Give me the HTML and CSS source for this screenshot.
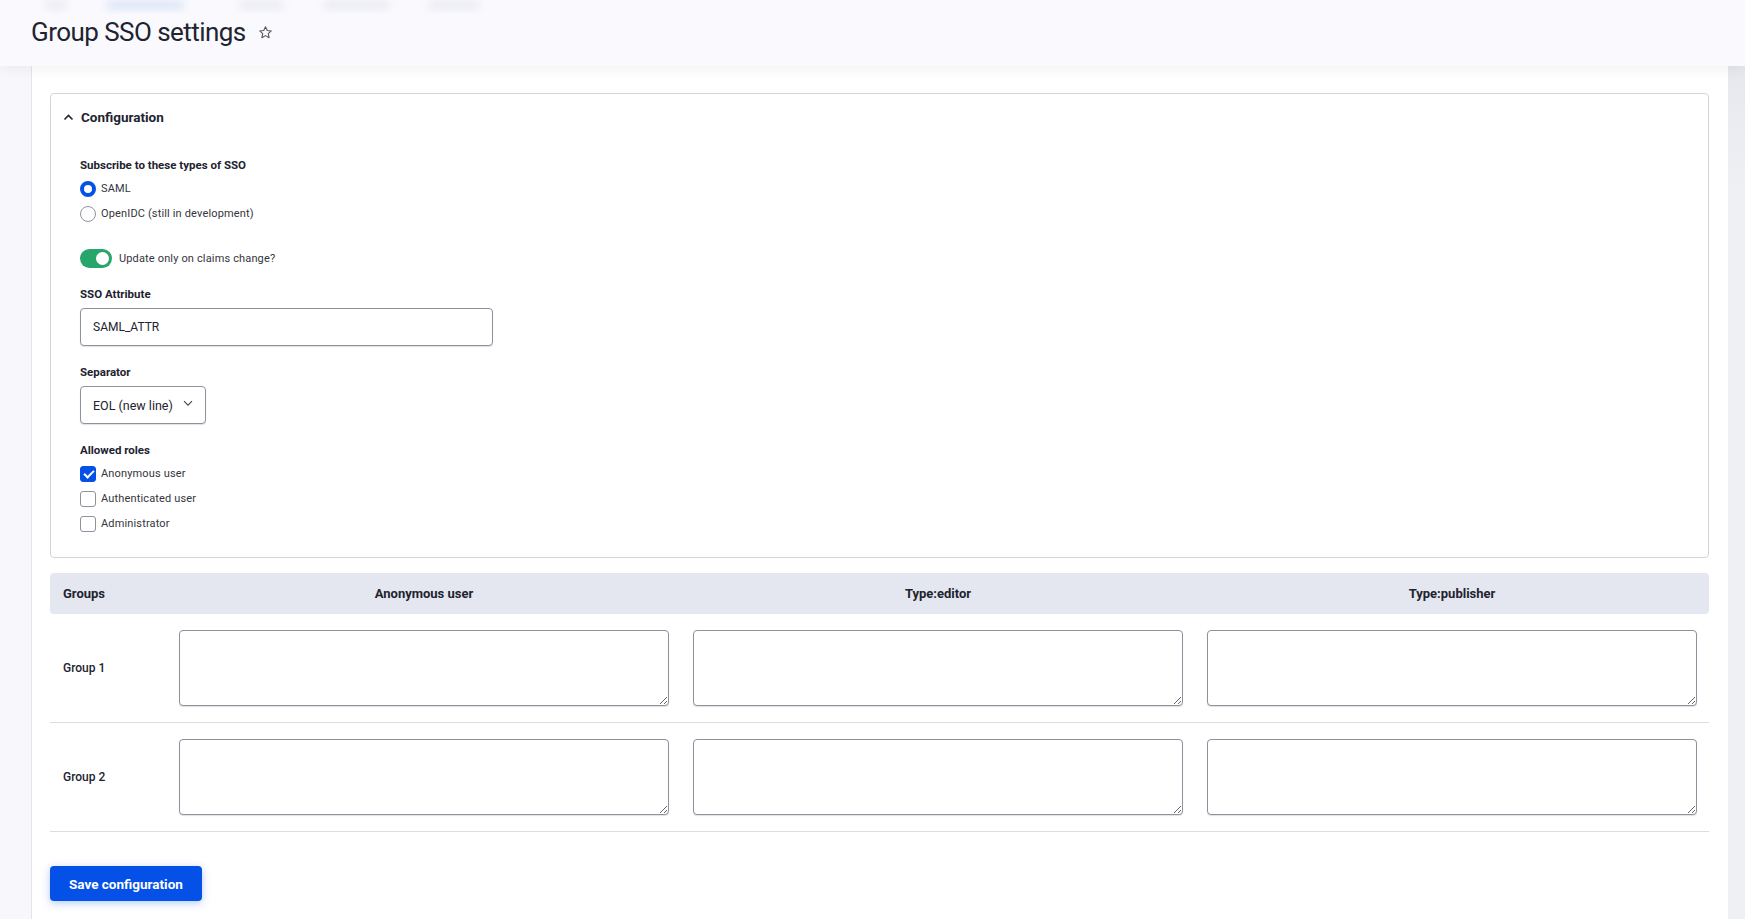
FILE: index.html
```html
<!DOCTYPE html>
<html>
<head>
    <title>Group SSO settings</title>
    <link rel="stylesheet" href="styles.css">
</head>
<body>
    <header class="page-header">
        <div class="tabs">
            <span class="tab tab-home"></span>
            <span class="tab tab-active"></span>
            <span class="tab tab-one"></span>
            <span class="tab tab-two"></span>
            <span class="tab tab-three"></span>
        </div>
        <h1 class="page-title">
            Group SSO settings
            <svg class="star" width="15" height="15" viewBox="0 0 24 24">
                <path d="M12 2.8l2.8 6 6.5.7-4.9 4.4 1.4 6.4L12 17l-5.8 3.3 1.4-6.4-4.9-4.4 6.5-.7z" fill="none" stroke="#55565b" stroke-width="1.7" stroke-linejoin="round"/>
            </svg>
        </h1>
    </header>

    <div class="layout">
        <main class="panel">
            <form class="sso-form">
                <details class="config" open>
                    <summary>
                        <svg class="summary-icon" width="11" height="11" viewBox="0 0 11 11">
                            <path d="M1.5 7.5L5.5 3.5 9.5 7.5" fill="none" stroke="#222330" stroke-width="1.6"/>
                        </svg>
                        Configuration
                    </summary>
                    <div class="config-body">
                        <div class="form-item first">
                            <div class="form-label">Subscribe to these types of SSO</div>
                            <label class="option">
                                <input type="radio" name="sso_type" value="saml" checked>
                                <span>SAML</span>
                            </label>
                            <label class="option">
                                <input type="radio" name="sso_type" value="openidc">
                                <span>OpenIDC (still in development)</span>
                            </label>
                        </div>

                        <div class="form-item toggle-item">
                            <label class="toggle">
                                <input type="checkbox" checked>
                                <span class="toggle-track"><span class="toggle-knob"></span></span>
                                <span>Update only on claims change?</span>
                            </label>
                        </div>

                        <div class="form-item">
                            <label class="form-label" for="sso-attribute">SSO Attribute</label>
                            <input type="text" id="sso-attribute" class="text-input" value="SAML_ATTR">
                        </div>

                        <div class="form-item">
                            <label class="form-label" for="separator">Separator</label>
                            <span class="select-wrap">
                                <select id="separator" class="select-input">
                                    <option>EOL (new line)</option>
                                    <option>Comma</option>
                                </select>
                                <svg class="select-icon" width="10" height="8" viewBox="0 0 10 8">
                                    <path d="M1 2.2l4 4 4-4" fill="none" stroke="#444" stroke-width="1.1"/>
                                </svg>
                            </span>
                        </div>

                        <div class="form-item">
                            <div class="form-label">Allowed roles</div>
                            <label class="option">
                                <input type="checkbox" checked>
                                <span>Anonymous user</span>
                            </label>
                            <label class="option">
                                <input type="checkbox">
                                <span>Authenticated user</span>
                            </label>
                            <label class="option">
                                <input type="checkbox">
                                <span>Administrator</span>
                            </label>
                        </div>
                    </div>
                </details>

                <table class="groups-table">
                    <thead>
                        <tr>
                            <th class="col-group">Groups</th>
                            <th>Anonymous user</th>
                            <th>Type:editor</th>
                            <th>Type:publisher</th>
                        </tr>
                    </thead>
                    <tbody>
                        <tr>
                            <td class="col-group">Group 1</td>
                            <td><textarea></textarea></td>
                            <td><textarea></textarea></td>
                            <td><textarea></textarea></td>
                        </tr>
                        <tr>
                            <td class="col-group">Group 2</td>
                            <td><textarea></textarea></td>
                            <td><textarea></textarea></td>
                            <td><textarea></textarea></td>
                        </tr>
                    </tbody>
                </table>

                <button type="submit" class="btn-primary">Save configuration</button>
            </form>
        </main>
        <div class="scroll-track"></div>
    </div>
</body>
</html>
```

FILE: styles.css
```css
* {
    box-sizing: border-box;
}

body {
    margin: 0;
    background: #f8f8fc;
    font-family: Roboto, "Noto Sans", sans-serif;
    color: #222330;
}

/* header */

.page-header {
    position: relative;
    z-index: 2;
    height: 66px;
    background: #fafafe;
    box-shadow: 0 4px 12px rgba(0, 0, 0, 0.05);
}

.tabs {
    display: flex;
    height: 14px;
    overflow: hidden;
}

.tab {
    display: block;
    height: 8px;
    margin-top: 1px;
    border-radius: 4px;
    background: #e8e9ef;
    filter: blur(4px);
}

.tab-home {
    width: 22px;
    margin-left: 45px;
}

.tab-active {
    width: 78px;
    margin-left: 39px;
    background: #d9e2f6;
}

.tab-one {
    width: 45px;
    margin-left: 55px;
}

.tab-two {
    width: 67px;
    margin-left: 39px;
}

.tab-three {
    width: 51px;
    margin-left: 38px;
}

.page-title {
    display: flex;
    align-items: center;
    margin: 0 0 0 31px;
    font-size: 26px;
    font-weight: 400;
    line-height: 36px;
    letter-spacing: -0.55px;
}

.star {
    margin-left: 12px;
}

/* layout */

.layout {
    display: flex;
    min-height: calc(100vh - 66px);
}

.panel {
    flex: 1;
    margin-left: 31px;
    padding: 27px 19px 40px 18px;
    background: #fff;
    border-left: 1px solid #e4e5eb;
}

.scroll-track {
    width: 17px;
    background: linear-gradient(#e6e8ee, #eef0f4 120px);
}

/* details */

.config {
    border: 1px solid #d4d5db;
    border-radius: 4px;
}

.config summary {
    display: flex;
    align-items: center;
    gap: 7px;
    padding: 15px 12px;
    font-size: 13.5px;
    font-weight: 700;
    line-height: 16px;
    list-style: none;
    cursor: pointer;
}

.config summary::-webkit-details-marker {
    display: none;
}

.config-body {
    padding: 0 29px 21px;
}

.form-item {
    margin-top: 18px;
}

.form-item.first {
    margin-top: 17px;
}

.form-item.toggle-item {
    margin-top: 23px;
}

.form-label {
    display: block;
    margin-bottom: 6px;
    font-size: 11.5px;
    font-weight: 700;
    line-height: 16px;
}

.form-item .form-label + .option {
    margin-top: -3px;
}

.option {
    display: flex;
    align-items: center;
    height: 25px;
    font-size: 11px;
    letter-spacing: 0.15px;
    color: #34353d;
}

.option input {
    appearance: none;
    width: 16px;
    height: 16px;
    margin: 0 5px 0 0;
    border: 1px solid #8e929c;
    background: #fff;
}

.option input[type="radio"] {
    border-radius: 50%;
}

.option input[type="radio"]:checked {
    border: 4px solid #0550e6;
}

.option input[type="checkbox"] {
    border-radius: 3px;
}

.option input[type="checkbox"]:checked {
    border-color: #0550e6;
    background: #0550e6;
    position: relative;
}

.option input[type="checkbox"]:checked::after {
    content: "";
    position: absolute;
    left: 4.5px;
    top: 1.5px;
    width: 4px;
    height: 8px;
    border: solid #fff;
    border-width: 0 2px 2px 0;
    transform: rotate(45deg);
}

/* toggle */

.toggle {
    display: flex;
    align-items: center;
    gap: 7px;
    height: 19px;
    font-size: 11px;
    letter-spacing: 0.15px;
    color: #34353d;
}

.toggle input {
    display: none;
}

.toggle-track {
    display: flex;
    justify-content: flex-end;
    align-items: center;
    width: 32px;
    height: 19px;
    padding: 0 3px;
    border-radius: 10px;
    background: #27a56a;
}

.toggle-knob {
    width: 13px;
    height: 13px;
    border-radius: 50%;
    background: #fff;
}

/* inputs */

.text-input,
.select-input,
textarea {
    border: 1px solid #8e929c;
    border-radius: 4px;
    background: #fff;
    box-shadow: 0 1px 1px rgba(0, 0, 0, 0.12);
    font-family: inherit;
    color: #222330;
}

.text-input {
    display: block;
    width: 413px;
    height: 38px;
    padding: 0 12px;
    font-size: 12px;
}

.select-wrap {
    position: relative;
    display: inline-block;
}

.select-input {
    appearance: none;
    width: 126px;
    height: 38px;
    padding: 0 28px 0 12px;
    font-size: 12.5px;
}

.select-icon {
    position: absolute;
    right: 13px;
    top: 13px;
    pointer-events: none;
}

/* groups table */

.groups-table {
    width: 100%;
    margin-top: 15px;
    border-collapse: collapse;
    table-layout: fixed;
}

.groups-table thead tr {
    background: #e4e7ef;
}

.groups-table th {
    height: 41px;
    padding: 0 12px;
    font-size: 13px;
    font-weight: 700;
    text-align: center;
}

.groups-table th:first-child {
    border-radius: 4px 0 0 4px;
}

.groups-table th:last-child {
    border-radius: 0 4px 4px 0;
}

.groups-table .col-group {
    width: 117px;
    padding-left: 13px;
    text-align: left;
}

.groups-table tbody tr {
    border-bottom: 1px solid #dcdde2;
}

.groups-table td {
    padding: 16px 12px;
    vertical-align: middle;
}

.groups-table td.col-group {
    font-size: 12px;
    font-weight: 500;
}

textarea {
    display: block;
    width: 100%;
    height: 76px;
    padding: 8px 12px;
    font-size: 12px;
}

/* actions */

.btn-primary {
    margin-top: 34px;
    height: 35px;
    padding: 0 19px;
    border: 0;
    border-radius: 4px;
    background: #0550e6;
    box-shadow: 0 2px 8px rgba(5, 80, 230, 0.3);
    font-family: inherit;
    font-size: 13.5px;
    font-weight: 700;
    color: #fff;
    cursor: pointer;
}
```
